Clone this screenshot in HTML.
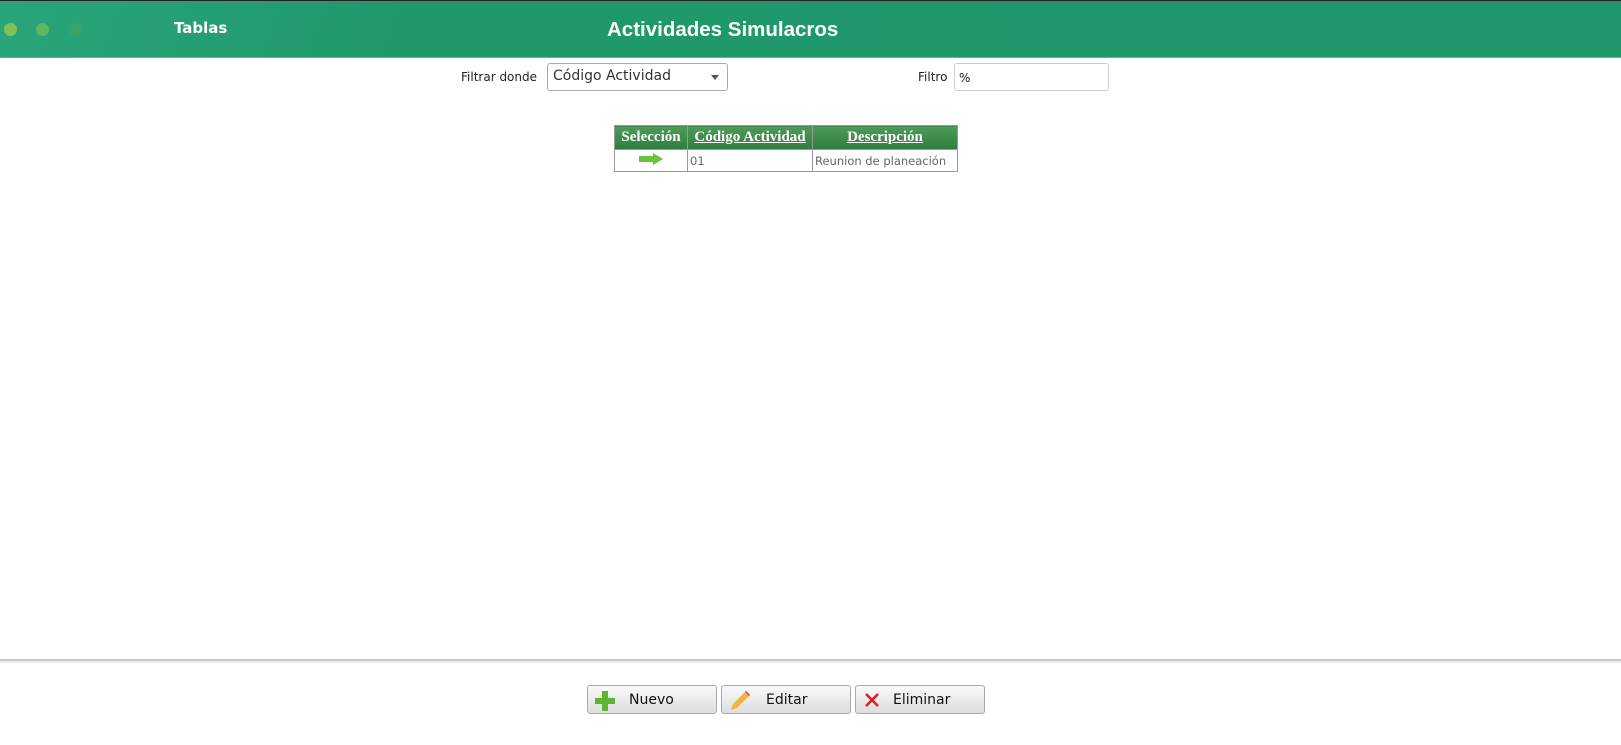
<!DOCTYPE html><html><head><meta charset="utf-8"><style>
body{margin:0;width:1621px;height:745px;background:#fff;position:relative;overflow:hidden;font-family:"DejaVu Sans","Liberation Sans",sans-serif}
.hdr{position:absolute;left:0;top:0;width:1621px;height:58px;background:linear-gradient(110deg,#2aa57a 0%,#1f996a 25%,#1e986a 100%);border-top:1px solid #222;box-sizing:border-box;border-bottom:1px solid #5cb890}
.dot{position:absolute;top:22px;width:13px;height:13px;border-radius:50%}
.t{position:absolute;color:#fff;font-weight:bold}
.lbl{position:absolute;font-size:12px;color:#222}
table{position:absolute;left:614px;top:125px;width:343px;table-layout:fixed;border-collapse:collapse;font-family:"Liberation Serif","DejaVu Serif",serif}
th{background:linear-gradient(#4e9a5a,#2f7d3e);color:#fff;font-size:15px;height:23px;padding:0;border:1px solid #999;text-decoration:underline;font-weight:bold;white-space:nowrap;overflow:hidden}
th:first-child{text-decoration:none}
td{border:1px solid #999;height:21px;font-size:11.5px;color:#666;font-family:"DejaVu Sans",sans-serif;padding:0 2px;white-space:nowrap;overflow:hidden}
.btn{position:absolute;top:685px;height:29px;border:1px solid #aaa;border-radius:3px;background:linear-gradient(#fafafa,#ddd);box-sizing:border-box;font-size:14px;color:#111}
.btn span{position:absolute;top:6px}
</style></head><body>
<div class="hdr">
<div class="dot" style="left:4px;background:#7ec356"></div>
<div class="dot" style="left:36px;background:#5db760"></div>
<div class="dot" style="left:69px;background:#3aa569"></div>
<div class="t" style="left:174px;top:18px;font-size:15px">Tablas</div>
<div class="t" style="left:607px;top:17px;font-size:20.5px;font-family:'Liberation Sans',sans-serif">Actividades Simulacros</div>
</div>
<div class="lbl" style="left:461px;top:70px">Filtrar donde</div>
<div style="position:absolute;left:547px;top:63px;width:181px;height:28px;border:1px solid #aaa;border-radius:3px;box-sizing:border-box;font-size:14px;color:#333;padding:4px 0 0 5px">Código Actividad<div style="position:absolute;right:8px;top:11px;border:4px solid transparent;border-top:5px solid #555"></div></div>
<div class="lbl" style="left:918px;top:70px">Filtro</div>
<div style="position:absolute;left:954px;top:63px;width:155px;height:28px;border:1px solid #ccc;border-radius:3px;box-sizing:border-box;font-size:12px;color:#222;padding:7px 0 0 4px">%</div>
<table><colgroup><col style="width:73px"><col style="width:125px"><col style="width:145px"></colgroup>
<tr><th>Selección</th><th>Código Actividad</th><th>Descripción</th></tr>
<tr><td style="text-align:center"><svg width="24" height="12"><path d="M0 3h14V0l10 6-10 6V9H0z" fill="#6cc23a"/></svg></td><td>01</td><td>Reunion de planeación</td></tr></table>
<div style="position:absolute;left:0;top:659px;width:1621px;height:2px;background:#c8c8c8"></div>
<div style="position:absolute;left:0;top:661px;width:1621px;height:2px;background:#eee"></div>
<div class="btn" style="left:587px;width:130px"><svg style="position:absolute;left:6px;top:4px" width="22" height="22"><path d="M8 1h6v7h7v6h-7v7H8v-7H1V8h7z" fill="#5db52f"/></svg><span style="left:41px">Nuevo</span></div>
<div class="btn" style="left:721px;width:130px"><svg style="position:absolute;left:6px;top:3px" width="24" height="24"><path d="M3 21l2-6 12-12 4 4-12 12z" fill="#f0b43c"/><path d="M17 3l4 4 1-1-4-4z" fill="#d33"/></svg><span style="left:44px">Editar</span></div>
<div class="btn" style="left:855px;width:130px"><svg style="position:absolute;left:8px;top:6px" width="16" height="16"><path d="M2 2l12 12M14 2L2 14" stroke="#e02020" stroke-width="2.6"/></svg><span style="left:37px">Eliminar</span></div>
</body></html>
